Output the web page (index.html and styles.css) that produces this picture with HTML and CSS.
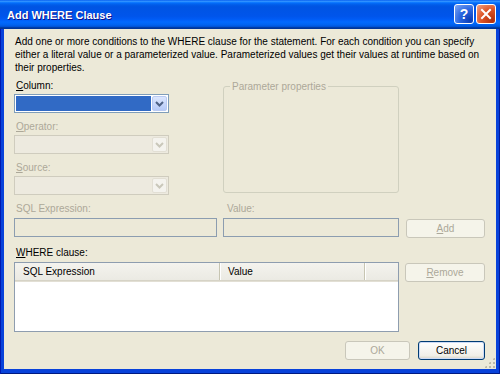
FILE: index.html
```html
<!DOCTYPE html>
<html>
<head>
  <title>Add WHERE Clause</title>
  <link rel="stylesheet" href="styles.css">
</head>
<body>
  <div class="window">
    <div class="titlebar">
      <span class="title">Add WHERE Clause</span>
      <div class="title-buttons">
        <button class="tb-btn tb-help">?</button>
        <button class="tb-btn tb-close">
          <svg width="12" height="12" viewBox="0 0 12 12"><path d="M2 2 L10 10 M10 2 L2 10" stroke="#fff" stroke-width="2" stroke-linecap="square"/></svg>
        </button>
      </div>
    </div>

    <div class="client">
      <p class="intro">Add one or more conditions to the WHERE clause for the statement. For each condition you can specify<br>either a literal value or a parameterized value. Parameterized values get their values at runtime based on<br>their properties.</p>

      <div class="top-row">
        <div class="left-col">
          <label class="lbl"><u>C</u>olumn:</label>
          <div class="combo">
            <span class="combo-value selected"></span>
            <span class="combo-btn"><svg width="9" height="6" viewBox="0 0 9 6"><path d="M1 1 L4.5 4.5 L8 1" fill="none" stroke="#4D6185" stroke-width="2"/></svg></span>
          </div>
          <label class="lbl disabled"><u>O</u>perator:</label>
          <div class="combo off">
            <span class="combo-value"></span>
            <span class="combo-btn"><svg width="9" height="6" viewBox="0 0 9 6"><path d="M1 1 L4.5 4.5 L8 1" fill="none" stroke="#C9C7BA" stroke-width="2"/></svg></span>
          </div>
          <label class="lbl disabled"><u>S</u>ource:</label>
          <div class="combo off last">
            <span class="combo-value"></span>
            <span class="combo-btn"><svg width="9" height="6" viewBox="0 0 9 6"><path d="M1 1 L4.5 4.5 L8 1" fill="none" stroke="#C9C7BA" stroke-width="2"/></svg></span>
          </div>
        </div>
        <fieldset class="group">
          <legend>Parameter properties</legend>
        </fieldset>
      </div>

      <div class="expr-row">
        <div>
          <label class="lbl disabled">SQL Expression:</label>
          <div class="textbox"></div>
        </div>
        <div>
          <label class="lbl disabled value-lbl">Value:</label>
          <div class="textbox"></div>
        </div>
        <button class="btn add-btn" disabled><u>A</u>dd</button>
      </div>

      <label class="lbl where-lbl"><u>W</u>HERE clause:</label>
      <div class="list-row">
        <div class="listview">
          <div class="lv-header">
            <span class="lv-col col-expr">SQL Expression</span>
            <span class="lv-col col-value">Value</span>
            <span class="lv-col col-rest"></span>
          </div>
        </div>
        <button class="btn remove-btn" disabled><u>R</u>emove</button>
      </div>

      <div class="footer">
        <button class="btn ok-btn" disabled>OK</button>
        <button class="btn cancel-btn">Cancel</button>
      </div>

      <div class="grip"></div>
    </div>
  </div>
</body>
</html>
```

FILE: styles.css
```css
* {
  box-sizing: border-box;
}
body {
  margin: 0;
  font-family: "Liberation Sans", Arial, sans-serif;
  font-size: 10px;
  color: #000;
  background-color: #ECE9D8;
}
button {
  font: inherit;
}
.window {
  width: 500px;
  height: 374px;
  display: flex;
  flex-direction: column;
  background-color: #0842DA;
  box-shadow: inset 1px 0 #0019B0, inset -1px 0 #001A9E, inset 0 -1px #001A80;
}
.titlebar {
  height: 29px;
  flex: none;
  display: flex;
  align-items: center;
  justify-content: space-between;
  padding: 0 4px 0 7px;
  background: linear-gradient(to bottom, #0058EE 0%, #3593FF 4%, #288EFF 6%, #127DFF 8%, #036FFC 10%, #0262EE 14%, #0057E5 20%, #0054E3 24%, #0055EB 56%, #005BF5 66%, #026AFE 76%, #0062EF 86%, #0052D6 92%, #0040AB 94%, #003092 100%);
}
.title {
  color: white;
  font-weight: bold;
  font-size: 11px;
  text-shadow: 1px 1px #0F1089;
}
.title-buttons {
  display: flex;
  gap: 2px;
  margin-top: -2px;
}
.tb-btn {
  width: 20px;
  height: 20px;
  padding: 0;
  border: 1px solid white;
  border-radius: 3px;
  display: flex;
  align-items: center;
  justify-content: center;
}
.tb-help {
  background: radial-gradient(circle at 85% 85%, #0B3CB5 0%, #2A66E0 50%, #80A8F6 100%);
  color: white;
  font-weight: bold;
  font-size: 14px;
  line-height: 1;
}
.tb-close {
  background: radial-gradient(circle at 85% 85%, #B2300C 0%, #DD5325 50%, #F2A487 100%);
}
.client {
  flex: 1;
  position: relative;
  margin: 0 4px 5px 4px;
  padding: 6px 11px 0 10px;
  background-color: #ECE9D8;
}
.intro {
  margin: 0;
  padding-left: 1px;
  line-height: 13px;
}
.lbl {
  display: block;
  line-height: 13px;
  margin-bottom: 2px;
  padding-left: 2px;
}
.disabled {
  color: #ACA899;
}
.top-row,
.expr-row,
.list-row {
  display: grid;
  grid-template-columns: 203px 176px 80px;
  column-gap: 6px;
}
.top-row {
  margin-top: 5px;
}
.combo {
  width: 155px;
  height: 19px;
  margin-bottom: 7px;
  border: 1px solid #7F9DB9;
  background-color: white;
  padding: 1px;
  display: flex;
  gap: 1px;
}
.combo.last {
  margin-bottom: 0;
}
.combo-value {
  flex: 1;
}
.combo-value.selected {
  background-color: #316AC5;
}
.combo-btn {
  width: 15px;
  border: 1px solid #B9CAF3;
  border-radius: 2px;
  background: linear-gradient(to bottom, #DCE6FD, #B6CAF8);
  display: flex;
  align-items: center;
  justify-content: center;
}
.combo.off {
  border-color: #CFCCBE;
  background-color: #EDEADF;
}
.combo.off .combo-btn {
  border-color: #E2DFD4;
  background: #F4F3EE;
}
.group {
  grid-column: 2;
  margin: 1px 0 0 0;
  padding: 0;
  height: 113px;
  border: 1px solid #D0D0BF;
  border-radius: 3px;
}
.group legend {
  margin-left: 6px;
  padding: 0 2px;
  line-height: 13px;
  color: #ACA899;
}
.expr-row {
  margin-top: 7px;
}
.expr-row .lbl {
  margin-bottom: 3px;
}
.value-lbl {
  padding-left: 4px;
}
.textbox {
  height: 19px;
  border: 1px solid #8C9DB0;
  background-color: #ECE9D8;
}
.btn {
  height: 19px;
  padding: 0;
  border: 1px solid #003C74;
  border-radius: 3px;
  background: linear-gradient(to bottom, #FFFFFF, #F0EFE8 80%, #D8D4C4);
  color: #000;
}
.btn:disabled {
  border-color: #C9C7BA;
  background: #F5F4EA;
  color: #ACA899;
}
.add-btn {
  align-self: end;
  margin-bottom: -1px;
  margin-left: 1px;
}
.where-lbl {
  margin-top: 9px;
  margin-bottom: 3px;
}
.listview {
  grid-column: 1 / 3;
  height: 70px;
  border: 1px solid #8E9DAF;
  background-color: white;
}
.lv-header {
  height: 18px;
  display: flex;
  background: linear-gradient(to bottom, #F4F3EE, #EBEAE3);
  border-bottom: 1px solid #D6D3C6;
  box-shadow: 0 1px #E2DFD4;
}
.lv-col {
  line-height: 17px;
  padding-left: 8px;
  border-right: 1px solid #C7C5B2;
  box-shadow: 1px 0 white;
  margin: 0;
}
.col-expr {
  width: 205px;
}
.col-value {
  width: 145px;
}
.col-rest {
  flex: 1;
  border-right: none;
  box-shadow: none;
}
.remove-btn {
  align-self: start;
  margin-top: 1px;
}
.footer {
  display: flex;
  justify-content: flex-end;
  gap: 8px;
  margin-top: 9px;
}
.ok-btn {
  width: 65px;
}
.cancel-btn {
  width: 67px;
  box-shadow: inset 0 0 0 1px #CDDBF6;
}
.grip {
  position: absolute;
  right: 1px;
  bottom: 1px;
  width: 11px;
  height: 11px;
  background: radial-gradient(circle, #BDBAA8 1px, transparent 1.3px) 0 0 / 4px 4px;
  clip-path: polygon(100% 0, 100% 100%, 0 100%);
}
```
